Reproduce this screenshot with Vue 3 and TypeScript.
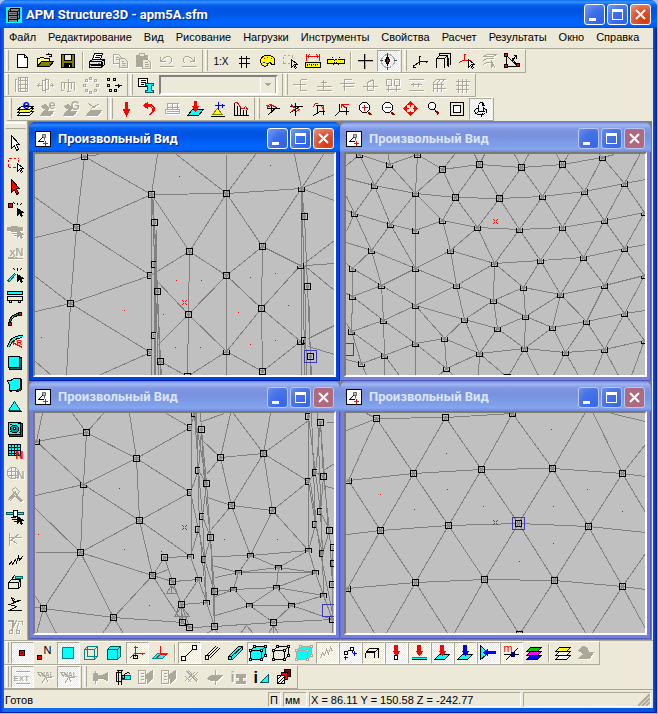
<script setup lang="ts">
import { ref } from 'vue'

/* ---------- icons: [path, stroke, fill?] on an 18px grid; lettering: [text, x, y, size, colour, weight?] ---------- */
type Layer = [string, string, string?]
type Letter = [string, number, number, number, string, number?]
interface Icon { p: Layer[]; t?: Letter }

const K = '#000', R = '#f00', B = '#00f', C = '#0ff', Y = '#ff0', G = '#aca899', W = '#fff', O = '#808000', N = 'none'
const cursor: Layer = ['M11,8V15L13,13L15,16L16,15L14,12H17Z', K, K]
const cube = 'M1,6L5,2H16V11L12,15H1ZM1,6H12V15M12,6L16,2'
const cubeDots = 'M0,5h2v2h-2zM4,1h2v2h-2zM15,1h2v2h-2zM11,5h2v2h-2zM0,14h2v2h-2zM11,14h2v2h-2zM15,10h2v2h-2z'
const axes = 'M8,3V12M8,9H16M8,9L2,14'
const axesHead = 'M7,4H9M15,8V10M2,12V15H4'

const icons: Record<string, Icon> = {
  new: { p: [['M4,2H11L14,5V15H4Z', K, W], ['M11,2V5H14', K]] },
  open: { p: [['M1,14V6H3L4,5H7L8,6H13V14Z', K, '#ffff80'], ['M1,14L5,9H17L13,14Z', K, O], ['M9,3Q12,0 15,3M15,1V4H12', K]] },
  save: { p: [['M2,2H15V15H2Z', K, O], ['M5,2H12V8H5Z', K, '#ece9d8'], ['M5,11H12V15H5Z', K, K], ['M10,12V14', W]] },
  print: { p: [['M4,7L6,1H14L12,7', K, W], ['M7,3H12M6,5H11', K], ['M1,9L4,7H16V12L13,15H1Z', K, '#ddd'], ['M1,9H13V15M13,9L16,7M1,12H13M2,13H12M3,15H12M14,9V14', K], ['M9,11H11', O]] },
  copy: { p: [['M2,2H7L10,5V11H2ZM4,5H7M4,7H8', G], ['M8,6H13L16,9V15H8Z', G, '#ece9d8'], ['M10,9H12M10,11H14M10,13H14', G]] },
  paste: { p: [['M2,3H13V14H2Z', G, G], ['M5,1H10V4H5Z', G, '#ece9d8'], ['M8,7H13L16,10V16H8Z', G, '#ece9d8'], ['M10,10H13M10,12H14M10,14H14', G]] },
  undo: { p: [['M3,4V9H8M3,9L6,6Q11,2 14,6Q15,9 12,11', G], ['M2,14H16', G]] },
  redo: { p: [['M14,4V9H9M14,9L11,6Q6,2 3,6Q2,9 5,11', G], ['M1,14H16', G]] },
  scale: { p: [], t: ['1:X', 1, 12, 10, K, 400] },
  grid: { p: [['M6,3V15M11,3V15M3,6H14M3,11H14', K]] },
  palette: { p: [['M2,9Q2,3 9,3Q16,3 16,8V12H13L12,10L9,11V13L6,14L3,12Z', K, Y], ['M5,6H6M8,5H9', R], ['M12,6H13M4,10H6', B], ['M7,11H8', '#080']] },
  pick: { p: [['M2,3H4M6,3H8M10,3H11V5M11,7V8M2,4V6M2,8V11H4M6,11H8', G], ['M10,7V15L12,13L14,16L15,15L13,12H16Z', K, '#ece9d8']] },
  dimension: { p: [['M2,1V8M15,1V8M3,4H14M5,2L3,4L5,6M12,2L14,4L12,6', R], ['M1,10H16V15H1Z', K, Y], ['M3,11V13M5,11V12M7,11V13M9,11V12M11,11V13M13,11V12', K]] },
  link: { p: [['M0,7H17V11H0Z', K, Y], ['M5,5L12,13M12,5L5,13', K], ['M6,6L11,11M11,6L7,11M1,9H16', Y]] },
  cross: { p: [['M9,1V16M1,9H16', '#aaa'], ['M8,1V16M1,8H16', K]] },
  compass: { p: [['M5,3L7,2H10L12,3L14,5L15,7V10L14,12L12,14L10,15H7L5,14L3,12L2,10V7L3,5Z', '#aaa'], ['M8,0V3M8,14V17M0,8H3M14,8H17', '#444'], ['M8,4L6,8L8,12L10,8Z', K, K], ['M8,6V9M7,8H9', R]] },
  axes: { p: [[axes, K], [axesHead, K]] },
  boxes: { p: [['M2,15V6L5,3H13V13M5,6H10V15M2,6H10L13,3M5,3V1H16V12', K], ['M14,5V14', K]] },
  axisPick: { p: [['M7,1V8H13M7,7L2,10M6,2H8', R], ['M11,7V15L13,13L15,16L16,15L14,12H17Z', K, W]] },
  planes: { p: [['M3,4L6,2H16L13,4ZM3,8L6,6H13M3,12L6,10H11', G], ['M11,7V15L13,13L15,16', G, G]] },
  truss: { p: [['M3,3V14H14L3,3M14,14L9,6', K], ['M1,1H4V4H1ZM1,12H4V15H1ZM13,11H16V14H13Z', K, R], ['M8,9L13,3M10,3H13V6', K]] },

  tower: { p: [['M5,1H14V15H5ZM7,1V15M12,1V15M5,4H14M5,8H14M5,12H14M2,2V15M1,3H3', G]] },
  mirror: { p: [['M9,1V16M6,4L12,3V13L6,14ZM1,9H5M13,9H17M3,7L1,9L3,11M15,7L17,9L15,11', G]] },
  fork: { p: [['M2,13V6H15V14M9,2V14M5,6V12M12,6V12M1,14H4M7,15H11', G]] },
  circle: { p: [['M7,1h2v2h-2zM12,3h2v2h-2zM14,8h2v2h-2zM12,13h2v2h-2zM7,15h2v2h-2zM3,13h2v2h-2zM1,8h2v2h-2zM3,3h2v2h-2z', G]] },
  array: { p: [['M2,2h2v2h-2zM8,2h2v2h-2zM2,8h2v2h-2zM4,13h2v2h-2zM9,13h2v2h-2z', K], ['M9,9H16M13,7V11M14,8V10', K]] },
  section: { p: [['M1,2H10V10H1Z', K, W], ['M3,4H8M3,6H8M3,8H6', K], ['M8,7H16V9H14V14H16V16H8V14H10V9H8Z', '#055', C]] },
  s1: { p: [['M0,8H8M8,3V14M8,3H14M8,8H13M8,14H14', G]] },
  s2: { p: [['M1,10H16M8,3V13M5,6H11M1,14H16', G]] },
  s3: { p: [['M1,7H16M6,2V14M4,10H15M6,3H13', G]] },
  s4: { p: [['M1,10H16M6,5V14H12M6,6L12,3M12,3V12', G]] },
  s5: { p: [['M2,3H7V9H2ZM10,3H15V9H10ZM1,13H16M4,9V15M12,9V15', G]] },
  s6: { p: [['M1,3H16M1,14H16M3,8H14M6,6V10M11,6V10', G]] },
  s7: { p: [['M3,15V6L6,3M7,15V6L10,3M11,15V6L14,3M2,8H13M2,12H15M6,3H15', G]] },
  s8: { p: [['M5,2V16M9,2V16M13,2V16M2,5H16M2,9H15M2,13H15', G]] },

  layerE: { p: [['M1,15L5,11H17L13,15Z', K, W], ['M1,12L5,8H17L13,12Z', K, Y], ['M1,9L5,6H17L13,9Z', K, W]], t: ['e', 6, 8, 13, B] },
  swanE: { p: [['M1,15L6,9L2,6L6,4L9,7L8,11H14L11,15H2Z', G, G]], t: ['e', 9, 8, 13, G] },
  swanG: { p: [['M1,15L6,9L2,6L6,4L9,7L8,11H14L11,15H2Z', G, G]], t: ['G', 8, 9, 12, G] },
  swanX: { p: [['M1,15L5,10H16L12,15Z', G, G], ['M3,3L10,8M14,3L6,8', G]] },
  force: { p: [['M8,2H10V9H8Z', R, R], ['M6,9H12L9,15Z', R, R]] },
  moment: { p: [['M3,5L7,2V8Z', R, R], ['M7,4H11L14,7V10L9,15M7,5H11L13,7V10L8,15M7,6H10L12,8V10', R]] },
  loads: { p: [['M3,3H15M4,3V9M9,3V9M14,3V9M3,7H15M2,9H16V13H2ZM3,11H15', G]] },
  plateLoad: { p: [['M1,15L6,9H17L12,15Z', K, C], ['M8,1H10V6H12L9,11L6,6H8Z', R, R]] },
  support: { p: [['M8,8L13,14H3Z', O, Y], ['M1,16H15', K], ['M9,1V9M5,5H15M13,3V7', B]] },
  chart: { p: [['M2,15V2M5,15V5M8,15V7M11,15V9M14,15V9', K], ['M2,3Q5,0 8,7Q11,10 13,6L16,10', R], ['M2,15H16', K]] },
  rotX: { p: [['M7,3V12M2,8H15M4,14L13,6', K], ['M3,6L8,5L12,7M3,4V7M2,5L8,4', R]] },
  rotY: { p: [['M8,2V15M2,6H15M3,12L14,5', K], ['M4,4L8,8L4,11M9,11L13,8M4,5L7,8', R]] },
  rotZ: { p: [['M7,5V13M5,5H13V14M3,15L9,11H14', K], ['M3,7Q4,2 8,3M13,4V9M11,6L13,9', R]] },
  rotFree: { p: [['M6,3V11H15M6,11L1,16M13,6V14', K], ['M8,4L13,8M8,4V7M8,4H11L15,4', R]] },
  zoomIn: { p: [['M6,2H10L13,5V9L10,12H6L3,9V5Z', K, W], ['M12,12L15,15M13,12L16,15M12,13L14,15', '#800'], ['M5,7H11M8,4V10', R]] },
  zoomOut: { p: [['M6,2H10L13,5V9L10,12H6L3,9V5Z', K, W], ['M12,12L15,15M13,12L16,15M12,13L14,15', '#800'], ['M5,7H11', R]] },
  pan: { p: [['M8,1L11,4H5ZM8,15L11,12H5ZM1,8L4,5V11ZM15,8L12,5V11Z', R, R], ['M8,4V6M8,10V12M4,8H6M10,8H12', R]] },
  zoom: { p: [['M5,2H8L10,4V7L8,9H5L3,7V4Z', K, W], ['M9,9L13,14', K], ['M11,11L14,14M12,11L14,13M11,12L13,15', '#800']] },
  fit: { p: [['M2,2H15V15H2Z', K], ['M5,5H12V12H5Z', K, W]] },
  orbit: { p: [['M7,4V11H13M7,11L4,14M11,2V5H13L11,2M8,3Q12,0 12,5', K], ['M3,10Q4,8 6,8M13,8Q17,10 14,13Q9,15 4,13L3,10M12,6Q12,16 9,16', K]] },

  arrow: { p: [['M5,1V14L8,11L10,16L12,15L10,10H13Z', K, W]] },
  marquee: { p: [['M2,2H5M7,2H9M11,2H12M2,3V5M2,7V10M12,3V5M2,11H4M6,11H9', R], ['M11,7V15L13,13L15,16L16,15L14,12H17Z', K, W]] },
  redArrow: { p: [['M5,1V14L8,11L10,16L12,15L10,10H13Z', K, R]] },
  nodePick: { p: [['M2,3H6V7H2Z', K, R], ['M9,4L7,2M11,4V2M13,5L15,3', K], cursor] },
  beamG: { p: [['M1,5H16V8H1ZM5,4H11V9H5Z', G, G], ['M5,11H10M7,13H11', G], ['M11,8V15L13,13L15,16L16,15L14,12H17Z', G, G]] },
  beamN: { p: [['M1,14H16M1,13H6L8,12L11,14', G]], t: ['xN', 3, 11, 11, G] },
  linePick: { p: [['M1,14L8,7L9,8L3,15Z', '#055', C], ['M9,4L7,2M11,4V1M13,4L15,2', K], cursor] },
  beam: { p: [['M1,3H16V6H1Z', K, C], ['M1,8H16V12H1ZM3,12V14H5V12M12,12V14H14V12', K]] },
  arc: { p: [['M3,12Q4,5 12,4', '#088'], ['M4,12Q5,6 12,5M3,12Q3,4 12,3', K], ['M2,12H5V15H2ZM12,2H15V5H12Z', K, R]] },
  arcR: { p: [['M1,15Q3,3 16,3M3,15Q5,6 16,5', K], ['M2,15Q4,4 16,4', C], ['M6,10L16,15M6,10L9,9M6,10L8,13', R]], t: ['R', 10, 12, 8, R] },
  plate: { p: [['M3,3H15V15H3Z', K, '#066'], ['M2,2H13V13H2Z', K, C]] },
  poly: { p: [['M2,5L6,3H15V13L12,15L7,14L4,15Z', K, '#066'], ['M1,4H5L7,2H14V12L10,14H3V9Z', K, C]] },
  tri: { p: [['M8,3L14,12H2Z', '#044', C], ['M2,13H15', K]] },
  ring: { p: [['M3,3H16V16H3Z', K, '#066'], ['M2,2H14V14H2Z', K, C], ['M6,5H10L12,7V10L10,12H6L4,9V7Z', K, '#099'], ['M7,7H9V9H7Z', K, W], ['M3,4H5M11,3H13M3,12L5,10M12,12H13', K]] },
  gridN: { p: [['M2,2H14V13H2Z', K, C], ['M5,2V13M8,2V13M11,2V13M2,5H14M2,8H14M2,11H9', K]], t: ['N', 9, 16, 11, R] },
  globeN: { p: [['M4,3H9L12,6V12L9,14H4L1,11V6ZM1,7H12M1,11H11M5,3V14M9,3V14', G]], t: ['N', 10, 14, 11, G] },
  hammer: { p: [['M1,14L9,5M3,15L10,7M2,14L9,6', G], ['M6,3L9,1L13,5L11,8L7,6Z', G], ['M10,8L16,14L14,15L9,10', G, G]] },
  jointPick: { p: [['M0,4H17V6H0Z', '#055', C], ['M7,2H11V8H7Z', K, W], ['M4,9H9M5,11H10M7,13H10', K], cursor] },
  branch: { p: [['M3,2V15M3,7H15M3,11L13,3M5,9L11,14', G]] },
  zigzag: { p: [['M2,13L5,9L6,12L9,7L10,10L12,4L13,8L16,4', K]] },
  block: { p: [['M2,8H12V14H2ZM2,8L5,5H14V12L12,14M12,8L14,5', K], ['M9,2H16V4H9Z', '#066', C], ['M5,5L8,1', K]] },
  spring: { p: [['M5,1L7,5L14,4L3,8L10,10L3,14H15M7,2L9,4', K]] },
  cut: { p: [['M1,3H7M11,3H16V6M1,2H7', G], ['M6,2V9M10,2L5,12M12,5L10,12M7,2V9', G], ['M3,12H6V15H3ZM10,12H13V15H10Z', G]] },

  node: { p: [['M6,6H11V11H6Z', K, R], ['M8,8H9V9H8Z', '#600']] },
  nodeN: { p: [['M1,11H5V15H1Z', K, R], ['M2,12H4V14H2Z', R]], t: ['N', 7, 9, 11, K, 400] },
  face: { p: [['M3,3H14V14H3Z', '#088', C]] },
  wire: { p: [['M2,5H12V15H2ZM5,2H15V12H5ZM2,5L5,2M12,5L15,2M12,15L15,12', '#088']] },
  solid: { p: [['M2,5L5,2H15V12L12,15H2Z', '#055', C], ['M2,5H12V15M12,5L15,2', '#055']] },
  origin: { p: [['M7,1V12M5,9H16M6,9L1,14M5,3H9M14,8V10', R], ['M5,11H9V14H5Z', K]] },
  plane: { p: [['M1,14L6,9H16L11,14Z', '#088', C], ['M9,1V10M9,10H15M9,10L4,14', R]] },
  rod: { p: [['M4,13L13,4', K], ['M1,12H5V16H1ZM12,1H16V5H12Z', K, W]] },
  rod3: { p: [['M3,11L12,2M4,13L14,3M6,14L16,4', K], ['M2,11H5V15H2Z', K]] },
  bar: { p: [['M2,12L12,2H16V5L6,15H2Z', K, C], ['M2,12H5V15M5,12L16,2', K]] },
  cubeC: { p: [[cube, K, C], [cubeDots, K, W]] },
  cubeW: { p: [[cube, K], [cubeDots, K, W]] },
  cubeG: { p: [[cube, G, C], [cubeDots, G, W]] },
  zigG: { p: [['M2,14L4,8L6,11L8,5L10,9L12,3L14,7', G]] },
  pins: { p: [['M3,7H6V10H3ZM9,3H12V6H9Z', K, W], ['M4,11V15M3,13H6M2,13H3M13,6V11M11,9H15M11,6V8', B], ['M6,7L9,5', K]] },
  slab: { p: [['M1,8L5,4H14V13M1,8H10L14,4M1,8V13M10,8V13', K], ['M2,7H10', K]] },
  loadN: { p: [['M7,1H10V7H12L9,11L6,7H7Z', R, R], ['M7,11H10V15H7Z', K, W]] },
  loadL: { p: [['M7,1H10V7H12L9,11L6,7H7Z', R, R], ['M1,13H16', '#088'], ['M1,15H16', K], ['M1,14H16', C]] },
  loadP: { p: [['M1,15L6,10H16L11,15Z', K, C], ['M7,1H10V7H12L9,11L6,7H7Z', R, R]] },
  loadB: { p: [['M1,15L6,10H16L11,15Z', K, C], ['M7,1H10V7H12L9,11L6,7H7Z', B, B]] },
  wind: { p: [['M1,1L6,6V11L1,15Z', K, C], ['M4,8L8,5V7H16V9H8V11Z', B, B]] },
  mass: { p: [['M1,10H16M9,10L3,16M9,10L15,4', K], ['M9,8H12V12H9Z', '#006', '#006']], t: ['m', 1, 7, 11, R, 400] },
  layers: { p: [['M1,15L5,11H16L12,15Z', K, B], ['M1,11L5,7H16L12,11Z', K, '#f0f'], ['M1,7L5,3H16L12,7Z', K, '#0c0']] },
  layersY: { p: [['M1,15L5,11H16L12,15Z', K, W], ['M1,11L5,7H16L12,11Z', K, W], ['M1,7L5,3H16L12,7Z', K, Y]] },
  swan: { p: [['M1,14L6,10L3,7L1,6L5,2L9,3L11,6L10,8H16L12,14Z', G, G]] },

  ext: { p: [['M2,3H16M2,15H16', G]], t: ['EXT', 0, 12, 8, G] },
  val: { p: [['M1,4H5L9,9H15M5,15L9,9M1,4L5,9M9,9L12,14', G]], t: ['VAL', 4, 8, 7, G] },
  val2: { p: [['M1,4H5L9,9H15M5,15L9,9M1,4L5,9M9,9L12,14', G]], t: ['VAL', 4, 8, 7, G] },
  flangeG: { p: [['M2,5H6V12H2ZM4,2V15M6,7H11L16,4V12L11,10H6Z', G, G]] },
  flange: { p: [['M8,7H16V11H8Z', '#066', C], ['M2,4H7V7H10V10H7V13H2ZM4,2V16M7,2V16M2,2H8', K], ['M9,7Q12,3 16,5', K]] },
  book: { p: [['M1,2H8V15H1ZM3,5H6M3,8H6M3,11H6', G], ['M9,6L15,2V10L10,15Z', G, G]] },
  book2: { p: [['M1,2H8V15H1ZM3,5H6M3,8H6M3,11H6', G], ['M9,6L15,2V10L10,15Z', G, G]] },
  bolt: { p: [['M3,3L14,14M5,2L15,12M2,12L12,3M4,14L14,4M2,8L8,14M4,3L14,13', G]] },
  level: { p: [['M9,1V16', G], ['M1,10L5,7H16L11,12H5Z', G, G]] },
  iT: { p: [['M7,6H16V9H13V13H16V15H7V13H10V9H7Z', G, G]], t: ['i', 1, 13, 15, G] },
  iTri: { p: [['M8,14L16,6V14Z', '#055', C]], t: ['i', 1, 14, 16, K] },
  hatch: { p: [['M9,1H15V8H9Z', K, '#800'], ['M6,4H12V11H6Z', K, R], ['M2,7H9V15H2Z', K, W], ['M2,11L6,7M2,15L9,8M5,15L9,11', K]] },
}

/* ---------- toolbars: '*' pressed, '-' unavailable, '|' separator, '[]' section list ---------- */
interface Tool { kind: 'button' | 'sep' | 'list'; name: string; pressed: boolean; off: boolean }
const parse = (s: string): Tool[] => s.split(' ').map((w) => ({
  kind: w === '|' ? 'sep' : w === '[]' ? 'list' : 'button',
  name: w.replace(/^[*-]+/, ''),
  pressed: w.startsWith('*'),
  off: /^\*?-/.test(w),
}))
const bars = (rows: string[][]) => rows.map((r) => r.map(parse))

const topRows = bars([
  ['new open save | print -copy -paste -undo -redo', 'scale grid palette pick dimension link | cross *compass', 'axes boxes axisPick -planes truss'],
  ['-tower -mirror -fork -circle array', 'section []', '-s1 -s2 -s3 -s4 -s5 -s6 -s7 -s8'],
  ['layerE -swanE -swanG -swanX', 'force moment -loads plateLoad support chart', 'rotX rotY rotZ rotFree zoomIn zoomOut pan zoom fit *orbit'],
])
const bottomRows = bars([
  ['*node nodeN *face wire solid *origin plane | *rod rod3 bar *cubeC cubeW cubeG *-zigG *pins *slab *loadN *loadL *loadP *loadB *wind *mass layers | layersY -swan'],
  ['*-ext -val *-val2', '-flangeG flange -book -book2 -bolt -level -iT iTri hatch'],
])
const sideTools = parse('arrow marquee redArrow nodePick -beamG -beamN linePick beam arc arcR plate poly tri ring gridN -globeN -hammer jointPick -branch zigzag block spring -cut')

const menu = ['Файл', 'Редактирование', 'Вид', 'Рисование', 'Нагрузки', 'Инструменты', 'Свойства', 'Расчет', 'Результаты', 'Окно', 'Справка']

/* ---------- meshes: model coordinates, three units to a pixel ---------- */
interface Model { ox: number; oy: number; nodes: string; links: string; dots: string; mark: [number, number]; sel: [number, number] }

const models: Model[] = [
  {
    ox: 105, oy: 102,
    nodes: '253,109 454,223 463,307 229,322 463,433c 450,466c 472,514 211,550 463,646c 450,697c 481,724 679,220 905,206u 913,289 568,394 787,379 679,466 902,437j 922,499 565,583 784,565 901,665u 913,661c 931,709 679,694u 787,754 562,768',
    links: '105,150-0-297,102 0-1-3-0 105,232-3-105,353 3-5-7-3 105,468-7-105,573 7-9-295,765 7-200,765 105,725-155,765 473,102-1-11-12 1-14 5-14 470,480-19-470,680 10-26 530,102-11-767,102 679,102-679,765 11-14-19-26 11-15-12 14-16-15 15-20 16-19-24 16-20-24 26-24-25 20-25 15-17 20-17 20-21-25 883,102-12-971,102 1002,163-12-1002,242 1002,360-917,427 917,435-1002,431 917,440-1002,511 1002,615-925,655 925,678-1002,703 1-2-6-10-484,765 454,223-454,765 460,240-466,765 463,320-480,765 469,330-463,765 457,240-475,765 12-13-18-23-934,765 905,206-905,765 908,206-914,765 913,440-920,765 928,560-931,765',
    dots: '538,169 529,481 373,571 490,583 124,652 526,682 811,136 604,481 751,472 826,460 715,577 865,556 751,673 826,661 601,682',
    mark: [553, 547], sel: [931, 709],
  },
  {
    ox: 24, oy: 102,
    nodes: '65,102l 154,132l 239,102u 313,148 424,132 550,142 673,132 794,112u 109,196l 232,220u 352,232 484,235 614,230u 740,214j 860,190j 49,280l 157,314l 232,332l 314,301l 419,322u 544,328u 674,322u 800,302j 920,276j 100,391l 337,392u 469,431u 608,422u 737,412u 860,386j 43,446l 130,496l 232,446l 355,496u 557,502u 667,524u 800,496j 920,466j 43,530l 232,557l 466,542u 136,602l 379,599u 563,588u 746,605u 860,581j 40,635l 232,670l 320,656u 479,626u 644,623u 559,686u 682,697u 800,688j 920,662j 139,706l 70,730l 424,701u 325,746u 508,771',
    links: '24,135-0-1-2-3-4-5-6-7-830,102 0-8-1-152,102 1-9-3-10-4-11-5-12-6-13-7-14-921,70 239,102-9 3-350,102 4-410,102 4-440,102 5-530,102 5-572,102 6-655,102 6-692,102 7-785,102 24,174-8-9-10-11-12-13-14-921,178 24,230-15-8-16-9-232,765 24,272-15-16-17-18-19-20-21-22-23 9-18-10-19-11-20-12-21-13-22-14-23 24,335-15-24-16-32 18-25-19-26-20-27-21-28-22-29-23 24,367-24-32-25-26-27-28-29-921,372 30-24-31-32-33-39-31-38 24,430-30-31-41 30-38-46 25-33-26-34-27-35-28-36-29-37 26-40-34-35-36-37 40-33-42-40-49 34-43-35-50-44-45-921,570 35-44-36-45-37 24,520-38-41-39-42-48-39 41-46-24,610 41-55-46-56-85,765 41-47-48-58-47-55-56-24,718 42-49-43-40 42-57-49-51-43-50-51 50-52-44-53-45-54 48-57-51-52-53-54 57-58 57-59-51 57-422,765 55-139,765 55-185,765 58-300,765 58-345,765 51-600,765 52-645,765 52-720,765 53-765,765 53-840,765 54-880,765',
    dots: '', mark: [472, 304], sel: [29, 688],
  },
  {
    ox: 105, oy: 99,
    nodes: '108,184j 259,157 409,235 250,313l 418,421 241,517 457,586 493,532 130,685 340,712 517,604 570,142c 605,148 583,100c 661,232 790,220 595,271c 619,310 571,337c 694,376 817,391 607,409c 595,448c 631,472 571,530n 613,539c 751,526n 716,578n 835,563n 596,599n 643,634 701,629n 829,622n 545,673 619,668n 748,677n 874,677n 547,727 568,742 643,739 820,727 926,108c 960,126 946,277c 971,289 926,305c 962,394c 946,433c 988,451 926,512n 967,520c 947,578n 998,613 971,645n 998,718 1000,503c 1000,551c',
    links: '127,99-0-1-310,99 218,99-1-2-3-1 0-3-105,347 389,99-2-4-3-5-4-6-5-8-9-5 500,99-11-2-18-4-24 105,384-5-105,517 6-9-37-6-10 6-505,568 7-24 7-10-33 105,648-8-105,683 8-108,760 8-170,760 9-308,760 9-370,760 10-29 6-7 575,99-575,530 583,99-619,310 602,99-613,310-631,472-643,739 11-13-16-18-22-24-29-34-39 590,99-597,448-619,668 12-17-23-30-39 16-17-21-23-25-30 16-21-25-34 22-25 12-16 605,178-14 619,282-14-15-19-14-690,99 623,352-19-20-15-810,99 631,450-19-26-20-45-15-926,122 700,99-15 605,125-672,99 20-49 636,530-26-49 27-26-28-51 636,556-27-28-49 645,592-27-51 27-31-32-28 30-31-35-32-36-40-35 32-51 32-53 31-645,650 35-645,705 35-36-54 37-38-39-40-54 36-53 33-29 33-34 33-37 33-38 524,604-596,599 514,615-498,640-532,640-514,615-514,640 545,680-522,710-568,710-545,680 545,680-545,712 536,680-526,710 820,735-805,760 820,735-820,760 820,735-835,760 643,748-615,760 643,748-655,760 740,735-760,760 740,735-720,760 926,99-926,512 935,99-946,430 953,99-967,520 42-44-48-52 41-43-45-47-49-51-53-54 43-46-50-53 42-43-44-46-48-50 47-50 932,310-962,520-998,700 980,126-1002,128 1002,250-971,270 1002,325-975,318 998,500-998,760 960,126-985,460',
    dots: '358,325 115,463 373,508 484,514 448,676 673,478 832,478', mark: [553, 442], sel: [984, 691],
  },
  {
    ox: 24, oy: 99,
    nodes: '115,116 322,112 523,99 31,301j 226,280 430,268 643,265 853,280 127,451 331,436 541,431 752,439 29,625j 232,607 439,598 649,601 853,619 545,764',
    links: '24,152-0-1-2 85,99-0-3-8-12 115,116-4-1-5-2-6-754,75-7-921,192 820,99-921,124 24,303-3-4-5-6-7-921,289 8-4-9-5-10-6-11-7-921,398 24,463-8-9-10-11-921,458 8-13-9-14-10-15-11-16-921,520 24,627-12-13-14-15-16-921,629 12-112,762 142,762-13-330,762 345,762-14-17-15-745,762 760,762-16-921,745',
    dots: '325,220 640,148 127,343 229,388 328,328 436,379 646,379 748,328 853,394 646,490 544,544', mark: [472, 427], sel: [541, 431],
  },
]

const shapes: Record<string, string> = {
  f: 'm-3,-3h6v6h-6z', u: 'm-3,-2v5h6v-5', l: 'm-3,-3v6h6v-3', j: 'm3,-3v6h-6v-3', c: 'm1,-3h-4v6h3', n: 'm-3,2v-4h6v4',
}
const views = models.map((m) => {
  const px = (v: number, o: number) => Math.floor(v / 3) - o / 3
  const at = (s: string): [number, number] => {
    const [x, y] = s.split(',').map(Number)
    return [px(x, m.ox), px(y, m.oy)]
  }
  const nodes = m.nodes.split(' ').map((s) => {
    const shape = /[a-z]$/.test(s) ? s.slice(-1) : 'f'
    return { p: at(s.replace(/[a-z]$/, '')), shape }
  })
  return {
    nodes: nodes.map((n) => `M${n.p}${shapes[n.shape]}`).join(''),
    hubs: nodes.map((n) => `M${n.p}m-1,-1h2v2h-2z`).join(''),
    links: m.links.split(' ').map((l) => 'M' + l.split('-').map((q) => (q.includes(',') ? at(q) : nodes[Number(q)].p)).join('L')).join(''),
    dots: m.dots ? m.dots.split(' ').map(at) : [],
    mark: [px(m.mark[0], m.ox), px(m.mark[1], m.oy)],
    sel: [px(m.sel[0], m.ox), px(m.sel[1], m.oy)],
  }
})
const markPixels = [[-2, -2], [-1, -1], [1, -1], [2, -2], [-1, 1], [-2, 2], [1, 1], [2, 2]]

const active = ref(0)
const section = ref('')
</script>

<template>
  <div class="desktop">
    <main class="window">
      <header class="title">
        <svg class="logo" viewBox="0 0 16 16" aria-hidden="true">
          <rect width="16" height="16" fill="#0ff" />
          <path d="M2 4L4 1H13V12L11 15H2Z" fill="#888" />
          <path d="M2.5 15V4.500M11.500 15V4.500M13.500 12V1.500M4.500 1V4M2 4.500H12L14 1.500H4.500L2 4.500M2 8.500H12L14 6M2 12.500H12L14 10" stroke="#000" fill="none" />
          <path d="M4 6.500H11M4 10.500H11" stroke="#444" />
        </svg>
        <h1>APM Structure3D - apm5A.sfm</h1>
        <button class="box" aria-label="Minimize"><svg viewBox="0 0 19 19"><path d="M4 13H11V16H4Z" fill="#fff" /></svg></button>
        <button class="box" aria-label="Maximize"><svg viewBox="0 0 19 19"><path d="M4 4H15V15H4ZM5 7V14H14V7Z" fill="#fff" fill-rule="evenodd" /></svg></button>
        <button class="box close" aria-label="Close"><svg viewBox="0 0 19 19"><path d="M5 5L14 14M14 5L5 14" stroke="#fff" stroke-width="2" /></svg></button>
      </header>

      <nav class="menu"><a v-for="m in menu" :key="m" href="#">{{ m }}</a></nav>

      <div class="bars">
        <div v-for="(row, i) in topRows" :key="i" class="row" :class="{ inset: i === 2 }">
          <div v-for="(group, j) in row" :key="j" class="group" role="toolbar">
            <i class="grip"></i>
            <template v-for="(t, k) in group" :key="k">
              <i v-if="t.kind === 'sep'" class="sep"></i>
              <select v-else-if="t.kind === 'list'" v-model="section" class="list" aria-label="Section"><option value=""></option></select>
              <button v-else class="tool" :class="{ pressed: t.pressed, off: t.off }" :disabled="t.off" :aria-label="t.name">
                <svg viewBox="0 0 18 18"><g transform="translate(.5 .5)">
                  <path v-for="(l, n) in icons[t.name].p" :key="n" :d="l[0]" :stroke="l[1]" :fill="l[2] || N" />
                  <text v-if="icons[t.name].t" :x="icons[t.name].t![1]" :y="icons[t.name].t![2]" :font-size="icons[t.name].t![3]" :fill="icons[t.name].t![4]" :font-weight="icons[t.name].t![5] ?? 700">{{ icons[t.name].t![0] }}</text>
                </g></svg>
              </button>
            </template>
          </div>
        </div>
      </div>

      <div class="middle">
        <div class="side" role="toolbar">
          <i class="hgrip"></i>
          <button v-for="t in sideTools" :key="t.name" class="tool" :class="{ off: t.off }" :disabled="t.off" :aria-label="t.name">
            <svg viewBox="0 0 18 18"><g transform="translate(.5 .5)">
              <path v-for="(l, n) in icons[t.name].p" :key="n" :d="l[0]" :stroke="l[1]" :fill="l[2] || N" />
              <text v-if="icons[t.name].t" :x="icons[t.name].t![1]" :y="icons[t.name].t![2]" :font-size="icons[t.name].t![3]" :fill="icons[t.name].t![4]" :font-weight="icons[t.name].t![5] ?? 700">{{ icons[t.name].t![0] }}</text>
            </g></svg>
          </button>
        </div>

        <div class="mdi">
          <section v-for="(v, i) in views" :key="i" class="child" :class="{ idle: active !== i }" @mousedown="active = i">
            <header class="caption">
              <svg class="doc" viewBox="0 0 16 16" aria-hidden="true">
                <rect width="16" height="16" fill="#000" /><rect x="1" y="1" width="14" height="14" fill="#fff" />
                <path d="M7.500 3.500H10.500V6.500H7.500ZM9.500 6.500V9.500" stroke="#666" fill="#bbb" />
                <path d="M3 10.500H9M4 10L8 6" stroke="#000" fill="none" /><path d="M10.500 10V15M8 12.500H13" stroke="#f00" />
              </svg>
              <h2>Произвольный Вид</h2>
              <button class="box" aria-label="Minimize"><svg viewBox="0 0 19 19"><path d="M4 13H11V16H4Z" fill="#fff" /></svg></button>
              <button class="box" aria-label="Maximize"><svg viewBox="0 0 19 19"><path d="M4 4H15V15H4ZM5 7V14H14V7Z" fill="#fff" fill-rule="evenodd" /></svg></button>
              <button class="box close" aria-label="Close"><svg viewBox="0 0 19 19"><path d="M5 5L14 14M14 5L5 14" stroke="#fff" stroke-width="2" /></svg></button>
            </header>
            <div class="view">
              <svg viewBox="0 0 299 221" preserveAspectRatio="xMinYMin slice">
                <g transform="translate(.5 .5)" fill="none">
                  <path :d="v.links" stroke="#808080" />
                  <path :d="v.hubs" stroke="#8c8c8c" />
                  <path :d="v.nodes" stroke="#000" />
                  <rect :x="v.sel[0] - 6" :y="v.sel[1] - 6" width="12" height="12" stroke="#3a3ab8" />
                </g>
                <rect v-for="(q, n) in markPixels" :key="'m' + n" :x="v.mark[0] + q[0]" :y="v.mark[1] + q[1]" width="1" height="1" fill="#f00" />
                <rect v-for="(d, n) in v.dots" :key="n" :x="d[0]" :y="d[1]" width="1" height="1" fill="#f00" />
              </svg>
            </div>
          </section>
        </div>
      </div>

      <div class="bars">
        <div v-for="(row, i) in bottomRows" :key="i" class="row">
          <div v-for="(group, j) in row" :key="j" class="group" role="toolbar">
            <i class="grip"></i>
            <template v-for="(t, k) in group" :key="k">
              <i v-if="t.kind === 'sep'" class="sep"></i>
              <button v-else class="tool" :class="{ pressed: t.pressed, off: t.off }" :disabled="t.off" :aria-label="t.name">
                <svg viewBox="0 0 18 18"><g transform="translate(.5 .5)">
                  <path v-for="(l, n) in icons[t.name].p" :key="n" :d="l[0]" :stroke="l[1]" :fill="l[2] || N" />
                  <text v-if="icons[t.name].t" :x="icons[t.name].t![1]" :y="icons[t.name].t![2]" :font-size="icons[t.name].t![3]" :fill="icons[t.name].t![4]" :font-weight="icons[t.name].t![5] ?? 700">{{ icons[t.name].t![0] }}</text>
                </g></svg>
              </button>
            </template>
          </div>
        </div>
      </div>

      <footer class="status">
        <span class="ready">Готов</span>
        <span class="pane key">П</span>
        <span class="pane unit">мм</span>
        <span class="pane coords">X = 86.11 Y = 150.58 Z = -242.77</span>
        <span class="pane last">
          <svg viewBox="0 0 12 12" aria-hidden="true"><path d="M0 12L12 0M4 12L12 4M8 12L12 8" stroke="#aca899" stroke-width="2" /></svg>
        </span>
      </footer>
    </main>
  </div>
</template>

<style>
body { background: #a9c1ea; }
</style>

<style scoped>
* { box-sizing: border-box; }
.desktop { height: 100vh; min-height: 700px; padding: 0 1px 1px 0; font: 11px/14px "Liberation Sans", sans-serif; color: #000; }
.window { display: flex; flex-direction: column; height: 100%; padding: 0 4px 4px; background: linear-gradient(90deg, #0831d9 0, #166aee 4px, #0855dd calc(100% - 4px), #001ea0 100%); border-bottom: 1px solid #001ea0; border-radius: 7px 7px 0 0; }
button { padding: 0; border: 0; background: none; }
svg { display: block; flex: none; }

.title { display: flex; align-items: center; gap: 2px; height: 28px; flex: none; margin: 0 -4px; padding: 1px 6px 0; border-radius: 7px 7px 0 0; background: linear-gradient(#0a6cf5 0, #3a93ff 2px, #0660f0 5px, #0053e0 9px, #0056e8 14px, #0066ff 22px, #0060f8 26px, #0046cc 28px); }
.logo { width: 16px; height: 16px; }
h1, h2 { flex: 1; margin: 0 0 0 2px; font: bold 13px/18px Roboto, sans-serif; color: #fff; text-shadow: 1px 1px 1px #0a1f7a; white-space: nowrap; }
.box { width: 21px; height: 21px; border: 1px solid #fff; border-radius: 3px; background: radial-gradient(circle at 85% 85%, #2f62ee, #3d6fe8 50%, #7a9df2 100%); }
.box svg { width: 19px; height: 19px; }
.box.close { background: radial-gradient(circle at 70% 80%, #d33a10, #dd5533 50%, #eb9a84 100%); }

.menu { display: flex; gap: 12px; height: 20px; flex: none; align-items: center; padding: 0 5px 2px; background: #ece9d8; }
.menu a { color: #000; text-decoration: none; white-space: nowrap; }

.bars { flex: none; background: #ece9d8; border-top: 1px solid #aca899; }
.row { display: flex; height: 24px; }
.row.inset { padding-left: 3px; }
.group { display: flex; align-items: flex-start; padding-right: 1px; border-top: 1px solid #fff; border-bottom: 1px solid #aca899; border-right: 1px solid #aca899; }
.grip { width: 3px; height: 21px; margin: 0 2px; border-left: 1px solid #fff; border-right: 1px solid #aca899; }
.sep { width: 2px; height: 18px; margin: 2px; border-left: 1px solid #aca899; border-right: 1px solid #fff; }
.tool { display: flex; flex: none; align-items: center; justify-content: center; width: 23px; height: 22px; padding-right: 1px; }
.tool svg { width: 18px; height: 18px; overflow: visible; shape-rendering: crispEdges; }
.tool text { font-family: "Liberation Sans", sans-serif; }
.tool.off svg { filter: drop-shadow(1px 1px 0 #fff); }
.tool.pressed { border: 1px solid; border-color: #aca899 #fff #fff #aca899; background: repeating-conic-gradient(#fff 0 25%, #ece9d8 0 50%) 0 0 / 2px 2px; }
.list { appearance: none; width: 119px; height: 20px; margin: 1px 3px 0 1px; border: 2px solid; border-color: #808080 #fff #fff #808080; border-radius: 0; background: linear-gradient(135deg, #aca899 50%, transparent 50%) right 4px center / 4px 4px no-repeat, linear-gradient(225deg, #aca899 50%, transparent 50%) right 8px center / 4px 4px no-repeat, linear-gradient(90deg, #fff 1px, #ece9d8 1px 15px, #aca899 15px) right / 16px 100% no-repeat, #ece9d8; }

.middle { display: flex; flex: 1; min-height: 0; }
.side { width: 24px; flex: none; background: #ece9d8; border-right: 1px solid #aca899; overflow: hidden; }
.hgrip { display: block; height: 7px; margin: 1px 1px 3px; border: 1px solid; border-color: #fff #ece9d8 #aca899; border-top-width: 2px; border-bottom-width: 1px; }
.mdi { display: grid; flex: 1; min-width: 0; grid-template-columns: 1fr 1fr; grid-template-rows: 1fr 1fr; padding: 1px; background: #808080; border-right: 1px solid #ece9d8; }
.child { display: flex; flex-direction: column; min-width: 0; min-height: 0; padding: 0 4px 4px; background: #0046d8; border-radius: 7px 7px 0 0; box-shadow: inset 1px 0 #0831d9, inset -1px -1px #001ea0; }
.child.idle { background: #7580dc; box-shadow: inset 1px 0 #6a76d4, inset -1px -1px #5058b8; }
.caption { display: flex; align-items: center; gap: 2px; height: 30px; flex: none; margin: 0 -4px; padding: 3px 6px 0; border-radius: 7px 7px 0 0; background: linear-gradient(#0046d0 0, #2a85ff 3px, #0660f0 6px, #0053e0 10px, #0056e8 15px, #0066ff 24px, #0060f8 28px, #0046cc 30px); }
.idle .caption { background: linear-gradient(#6f82d4 0, #a2b8f4 3px, #8299e2 7px, #7890de 13px, #80a0ea 24px, #86a6ee 27px, #6f86da 30px); }
.idle h2 { color: #dce6fa; text-shadow: none; }
.idle .box { border-color: #b9c8f2; background: radial-gradient(circle at 80% 80%, #3568e8, #4a74e6 60%, #6f90ea); }
.idle .box.close { background: #b06a80; }
.doc { width: 16px; height: 16px; }
.caption h2 { margin-left: 5px; }
.view { flex: 1; min-height: 0; border: 2px solid; border-color: #7c7a70 #fff #fff #7c7a70; background: #c0c0c0; overflow: hidden; }
.view svg { width: 100%; height: 100%; shape-rendering: crispEdges; }

.status { display: flex; flex: none; gap: 2px; height: 19px; padding: 2px 2px 1px 1px; background: #ece9d8; border-top: 1px solid #aca899; }
.ready { flex: 0 0 261px; line-height: 16px; }
.pane { padding: 0 1px; border: 1px solid; border-color: #aca899 #fff #fff #aca899; white-space: nowrap; line-height: 14px; }
.pane.key { flex: 0 0 13px; }
.pane.unit { flex: 0 0 24px; }
.pane.coords { flex: 1 1 212px; }
.pane.last { flex: 0 0 128px; display: flex; justify-content: flex-end; align-items: flex-end; padding: 0; }
.pane.last svg { width: 12px; height: 12px; }
</style>
